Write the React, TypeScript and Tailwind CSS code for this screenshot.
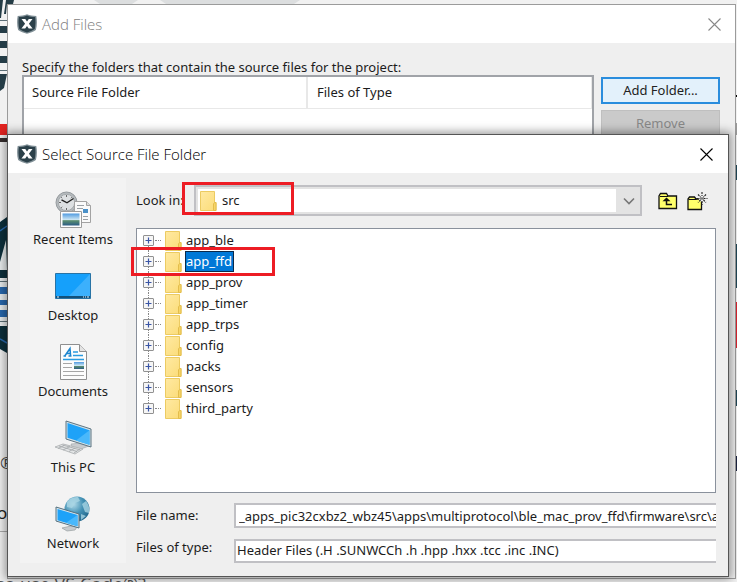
import React, { useState } from 'react';

const FOLDERS = ['app_ble', 'app_ffd', 'app_prov', 'app_timer', 'app_trps', 'config', 'packs', 'sensors', 'third_party'];

const AppIcon = () => (
  <svg width="20" height="20" viewBox="0 0 20 20" className="shrink-0" aria-hidden="true">
    <path d="M10 .2c2.600 1.100 6 1.700 9.300 1.700.9 4.500.8 9.800-.4 14.200-2.600 1.700-5.500 2.900-8.900 3.700-3.400-.8-6.300-2-8.900-3.700C-.1 11.700-.2 6.400.7 1.900 4 1.900 7.400 1.300 10 .2z" fill="#7f8e95" />
    <path d="M10 1.500c2.500 1 5.300 1.500 8.100 1.500.6 4 .5 8.300-.4 12-2.200 1.500-4.800 2.600-7.700 3.400-2.900-.8-5.500-1.900-7.700-3.400C1.400 11.300 1.300 7 1.900 3 4.700 3 7.500 2.500 10 1.500z" fill="#2b4049" />
    <path d="M4.500 5h3.800L10 7.500 11.800 5h3.700l-3.600 4.800 3.700 4.700h-3.900L10 12l-1.800 2.500H4.400l3.700-4.700z" fill="#fff" />
  </svg>
);

const CloseIcon = () => (
  <svg width="13" height="13" viewBox="0 0 13 13" fill="none" stroke="currentColor" strokeWidth="1.100" aria-hidden="true">
    <path d="M.5.5l12 12M12.500.5l-12 12" />
  </svg>
);

const FolderIcon = () => (
  <svg width="17" height="20" viewBox="0 0 17 20" className="shrink-0" aria-hidden="true">
    <defs>
      <linearGradient id="folder" x1="0" y1="0" x2="1" y2="1">
        <stop offset="0" stopColor="#ffe9a2" />
        <stop offset="1" stopColor="#fbdc78" />
      </linearGradient>
    </defs>
    <path d="M.5.5h14v11h1.500v8H.5z" fill="url(#folder)" stroke="#eccb62" />
    <path d="M13.500 19.500v-6.500l1-1.500h1.500v8z" fill="#f7d568" stroke="#e3bd4c" />
  </svg>
);

const UpFolderIcon = () => (
  <svg width="20" height="18" viewBox="0 0 20 18" aria-hidden="true">
    <path d="M1 16.500V4l1.500-2.500h6L10 4h8.500v12.500z" fill="#ffff6b" stroke="#111" strokeWidth="1.300" />
    <path d="M2 4.500h8" stroke="#111" />
    <path d="M8.500 7v5.500H14" fill="none" stroke="#111" strokeWidth="1.500" />
    <path d="M4.500 9.300h8l-4-3.800z" fill="#111" />
  </svg>
);

const NewFolderIcon = () => (
  <svg width="21" height="20" viewBox="0 0 21 20" aria-hidden="true">
    <path d="M1 18.500V8l1.500-2h5L9 8h5.500v10.500z" fill="#ffff6b" stroke="#111" strokeWidth="1.300" />
    <path d="M1.500 8.500h8" stroke="#111" />
    <circle cx="15" cy="7.500" r="3.200" fill="#efefef" />
    <path d="M15 1v4M15 10v4M9.500 7.500h4M16.500 7.500h4M11 3.500l2.500 2.500M16.500 9l2.500 2.500M19 3.500L16.500 6M13.500 9L11 11.500" stroke="#222" strokeWidth="1.100" strokeDasharray="2 1" />
    <path d="M13 5.500l4 4M17 5.500l-4 4" stroke="#444" strokeWidth=".9" />
  </svg>
);

const SkyDefs = ({ id }: { id: string }) => (
  <defs>
    <linearGradient id={id} x1="0" y1="0" x2="0" y2="1">
      <stop offset="0" stopColor="#4f9ae0" />
      <stop offset=".5" stopColor="#c9e4f3" />
      <stop offset=".6" stopColor="#5b8e6e" />
      <stop offset="1" stopColor="#2b5c86" />
    </linearGradient>
  </defs>
);

const RecentIcon = () => (
  <svg width="37" height="38" viewBox="0 0 37 38" aria-hidden="true">
    <SkyDefs id="skyRecent" />
    <circle cx="11.500" cy="11.500" r="10.500" fill="#b4b9bc" stroke="#94999d" />
    <circle cx="11.500" cy="11.500" r="8.200" fill="#dde0e2" stroke="#a5aaad" />
    <path d="M11.500 4v2M11.500 17v2M4 11.500h2M6.200 6.200l1 1M16.800 6.200l-1 1M6.200 16.800l1-1" stroke="#666" />
    <path d="M6.500 8.800l5.500 3 6.500-4.300" stroke="#222" strokeWidth="1.400" fill="none" />
    <path d="M19.500 10.500h12l4 4v17h-16z" fill="#fafafa" stroke="#a3a3a3" />
    <path d="M31.500 10.500v4h4" fill="#ddd" stroke="#a3a3a3" />
    <path d="M22 14.500h7M22 17.500h6M28 25.500h5M28 28.500h5" stroke="#9aa0a5" />
    <path d="M28 18h5v4h-5z" fill="#4a90c8" />
    <path d="M5.500 20.500h21v16h-21z" fill="#fdfdfd" stroke="#9c9c9c" />
    <path d="M7.500 22.500h17v12h-17z" fill="url(#skyRecent)" />
  </svg>
);

const DesktopIcon = () => (
  <svg width="36" height="26" viewBox="0 0 36 26" aria-hidden="true">
    <path d="M.5.5h35v25H.5z" fill="#15a0fb" stroke="#2873a5" />
    <path d="M35 1L14 23h21z" fill="#3cb0fc" />
    <path d="M1 23h34v2H1z" fill="#12507a" />
    <path d="M2 24h2M28 24h1M30 24h1M32 24h2" stroke="#e7f5ff" />
  </svg>
);

const DocumentsIcon = () => (
  <svg width="27" height="36" viewBox="0 0 27 36" aria-hidden="true">
    <SkyDefs id="skyDocs" />
    <path d="M.5.5h19l7 7v28H.5z" fill="#fcfcfc" stroke="#8f8f8f" />
    <path d="M19.500.5v7h7" fill="#e3e3e3" stroke="#8f8f8f" />
    <path d="M3.500 12h2.500M8.500 12h3M4.800 12L10 4.500l.6 7.500M6.500 9.500h4" stroke="#1c86cf" strokeWidth="1.500" fill="none" />
    <path d="M13 8h5M13 11.500h10M3 15.500h21" stroke="#2a9be0" strokeWidth="1.400" />
    <path d="M3 19.500h9M3 23.500h9M3 27.500h21M3 31.500h21" stroke="#a6a6a6" />
    <path d="M14 18h10v7H14z" fill="url(#skyDocs)" />
  </svg>
);

const ThisPcIcon = () => (
  <svg width="38" height="36" viewBox="0 0 38 36" aria-hidden="true">
    <path d="M17 24l10-1 8 3-8 3-9-2z" fill="#c8cccf" stroke="#a0a5a8" strokeWidth=".6" />
    <path d="M12 1l25 8v18l-25-8z" fill="#cfe0e8" stroke="#5d7481" />
    <path d="M13.500 3l22 7.200v14.600l-22-7z" fill="#1ea2f8" />
    <path d="M35.500 10.200v14.600L22 20.500z" fill="#49b8fb" />
    <path d="M1 27l8-3 20 5-8 5z" fill="#e3e5e6" stroke="#a9adaf" strokeWidth=".8" />
    <path d="M5 26l18 5.500M8.500 25l18 5M4 28.500l6-3M9 30l7-3.500M15 31.500l6-3.500M20 33l6-4" stroke="#a2a6a8" strokeWidth=".8" />
  </svg>
);

const NetworkIcon = () => (
  <svg width="36" height="36" viewBox="0 0 36 36" aria-hidden="true">
    <defs>
      <radialGradient id="globe" cx=".35" cy=".3" r=".8">
        <stop offset="0" stopColor="#b4dcea" />
        <stop offset=".5" stopColor="#4492b5" />
        <stop offset="1" stopColor="#1d6287" />
      </radialGradient>
    </defs>
    <circle cx="22" cy="13" r="12.500" fill="url(#globe)" />
    <path d="M12 6c3-4 7-5 11-5l2 4-5 2-3 5-5-1zM27 8l4-3c3 4 4 8 3 12l-4-1zM26 18l5 2-5 4z" fill="#a8d5e4" opacity=".8" />
    <path d="M7 32l9-2 6 1-2 3-8 1z" fill="#c8cccf" stroke="#8c9396" strokeWidth=".6" />
    <path d="M1 11l23 7v14L1 25z" fill="#d7e5ec" stroke="#54707f" />
    <path d="M2.500 13l20 6v11.200l-20-6z" fill="#1ea2f8" />
    <path d="M22.500 19v11.200L11 26.800z" fill="#49b8fb" />
  </svg>
);

const PLACES = [
  { label: 'Recent Items', icon: <RecentIcon /> },
  { label: 'Desktop', icon: <DesktopIcon /> },
  { label: 'Documents', icon: <DocumentsIcon /> },
  { label: 'This PC', icon: <ThisPcIcon /> },
  { label: 'Network', icon: <NetworkIcon /> },
];

interface TitleBarProps {
  title: string;
  inactive?: boolean;
}

const TitleBar: React.FC<TitleBarProps> = ({ title, inactive }) => (
  <header className={`flex h-[38px] items-center bg-white pl-[9px] font-['Open_Sans','Noto_Sans',sans-serif] text-[15px] font-light ${inactive ? 'pr-[14px] text-[#808080]' : 'pr-[15px] text-black'}`}>
    <AppIcon />
    <h2 className="ml-[5px] flex-1 leading-5">{title}</h2>
    <button aria-label="Close" className={inactive ? 'text-[#888]' : 'text-black'}>
      <CloseIcon />
    </button>
  </header>
);

/* Web page that shows through around the windows */
const Backdrop = () => (
  <div className="absolute inset-0 overflow-hidden bg-[#f1f1f1]" aria-hidden="true">
    <svg width="100%" height="582" className="absolute top-0 left-0">
      <path d="M94 0h44l-6 4H100zM160 0h140l-6 4H166z" fill="#dcdedf" />
      <path d="M0 0h3L1 18H0zM6 0h8l-1 4H7L6 14H4z" fill="#243c46" />
      <path d="M0 26h7v7H0zM0 41h7v7H0zM0 56h7v7H0zM0 74h7L4 88l-4 3z" fill="#243c46" />
      <path d="M0 20.500h7M0 70.500h7" stroke="#5c6f77" />
      <path d="M0 124h7v11H0z" fill="#e22320" />
      <path d="M0 138h7v4H0z" fill="#372f2f" />
      <path d="M0 222l7-5v61H0zM0 326h7v27l-7-4z" fill="#0d303c" />
      <path d="M0 231l7-5M0 339l7 4" stroke="#2868ad" strokeWidth="1.500" />
      <path d="M0 262l6-22 1 30H0z" fill="#e9edee" />
      <path d="M0 279h7v46H0z" fill="#e9edee" />
      <path d="M0 281.500h7M0 321.500h7" stroke="#5c6f77" />
      <path d="M0 287h7v7H0zM0 300h7v5H0zM0 310h7v7H0z" fill="#2868ad" />
      <path d="M0 531.500h7" stroke="#aaa" />
    </svg>
    <div className="absolute inset-y-0 right-0 flex w-0.5 flex-col">
      <div className="mt-[95px] h-[2px] bg-black" />
      <div className="mt-[26px] h-[12px] bg-[#999]" />
      <div className="mt-[30px] h-[15px] bg-[#1f4656]" />
      <div className="mt-[64px] h-[44px] bg-[#1f4656]" />
      <div className="mt-[14px] h-[46px] bg-[#d8222d]" />
      <div className="mt-[42px] h-[16px] bg-[#1f4656]" />
      <div className="mt-[50px] h-[15px] bg-[#1b2340]" />
    </div>
    <p className="absolute top-[453px] left-0 text-[17px] leading-5 text-[#444]">®</p>
    <p className="absolute top-[501px] left-[-3px] text-[17px] leading-6 text-[#222]">o</p>
    <p className="absolute bottom-[-14px] left-[-4px] font-['Open_Sans',sans-serif] text-[18px] leading-6 text-[#555]">so use VS Code®?</p>
  </div>
);

const AddFilesWindow = () => (
  <section className="flex flex-1 flex-col border border-[#9b9b9b] bg-[#efefef]">
    <TitleBar title="Add Files" inactive />
    <div className="flex items-start gap-[7px] pt-4 pr-[15px] pl-[14px]">
      <div className="flex-1">
        <p className="h-4 leading-4">Specify the folders that contain the source files for the project:</p>
        <div className="h-[70px] border-2 border-[#a0a3a8] bg-white">
          <table className="w-full table-fixed">
            <thead>
              <tr className="h-[31px] border-b border-[#e8e8e8] text-left">
                <th className="w-[283px] border-r-2 border-[#e8e8e8] pl-2 font-normal">Source File Folder</th>
                <th className="border-r border-[#e8e8e8] pl-[9px] font-normal">Files of Type</th>
              </tr>
            </thead>
          </table>
        </div>
      </div>
      <div className="flex w-[119px] flex-col gap-[6px] pt-[18px]">
        <button className="h-[27px] border-2 border-[#2a8ddd] bg-[#e3f1fb] text-[#222]">Add Folder...</button>
        <button disabled className="h-[27px] border border-[#bfbfbf] bg-[#cacaca] text-[#888]">Remove</button>
      </div>
    </div>
  </section>
);

const PlacesBar = () => (
  <nav className="flex w-[106px] flex-col gap-[18px] bg-[#f3f3f3] pt-3">
    {PLACES.map(p => (
      <button key={p.label} className="flex flex-col items-center">
        <span className="flex h-10 items-center">{p.icon}</span>
        <span className="h-[18px] leading-[18px] whitespace-nowrap">{p.label}</span>
      </button>
    ))}
  </nav>
);

const FolderTree = () => {
  const [selected, setSelected] = useState('app_ffd');

  return (
    <div className="relative h-[265px] border border-[#8a919c] bg-white pt-px pl-[6px]">
      <ul>
        {FOLDERS.map((name, i) => (
          <li key={name} className="flex h-[21px] items-center">
            <span className="flex h-full w-[11px] flex-col items-center">
              <span className={`w-px flex-1 border-l border-dotted ${i === 0 ? 'border-transparent' : 'border-[#888]'}`} />
              <button aria-label={`Expand ${name}`} className="h-[11px] w-[11px] rounded-[1px] border border-[#919191] bg-[#f6f6f6]">
                <svg width="9" height="9" viewBox="0 0 9 9" className="block" aria-hidden="true">
                  <path d="M4.500 1.500v6M1.500 4.500h6" stroke="#3a55a5" strokeWidth="1.200" />
                </svg>
              </button>
              <span className={`w-px flex-1 border-l border-dotted ${i === FOLDERS.length - 1 ? 'border-transparent' : 'border-[#888]'}`} />
            </span>
            <span className="mr-1 ml-px w-[6px] border-t border-dotted border-[#888]" />
            <FolderIcon />
            <button
              onClick={() => setSelected(name)}
              className={`ml-[3px] h-[21px] border pr-px leading-[19px] ${name === selected ? 'border-[#0b2a4a] bg-[#0078d7] text-white' : 'border-transparent'}`}
            >
              {name}
            </button>
          </li>
        ))}
      </ul>
      <div className="pointer-events-none absolute top-[18px] left-[-6px] h-[29px] w-36 border-3 border-[#ed1c24]" />
    </div>
  );
};

const SelectFolderDialog = () => (
  <section role="dialog" aria-label="Select Source File Folder" className="absolute top-[130px] right-[7px] left-0 border border-[#555] bg-[#efefef] shadow-[0_0_9px_2px_rgba(0,0,0,0.4)]">
    <TitleBar title="Select Source File Folder" />
    <div className="flex pt-[5px] pr-3 pb-[13px] pl-3">
      <PlacesBar />
      <div className="flex min-w-0 flex-1 flex-col pt-[7px] pl-[10px]">
        <div className="relative mb-3 flex h-[31px] items-center">
          <label htmlFor="look-in" className="w-[58px] whitespace-nowrap">Look in:</label>
          <div className="flex h-full flex-1 border-2 border-[#c0c0c4] bg-[#e3e3e3] p-[2px]">
            <div className="flex flex-1 items-center bg-white pl-0.5">
              <FolderIcon />
              <select id="look-in" className="ml-1 flex-1 appearance-none bg-transparent pl-px">
                <option>src</option>
              </select>
            </div>
            <svg width="22" height="23" viewBox="0 0 22 23" fill="none" aria-hidden="true">
              <path d="M8 9.500l5 5 5-5" stroke="#777" strokeWidth="1.600" />
            </svg>
          </div>
          <button aria-label="Up one level" className="ml-4">
            <UpFolderIcon />
          </button>
          <button aria-label="Create new folder" className="mr-2 ml-[9px]">
            <NewFolderIcon />
          </button>
          <div className="pointer-events-none absolute top-[-3px] left-[46px] h-[33px] w-28 border-3 border-[#ed1c24]" />
        </div>
        <FolderTree />
        <div className="mt-[10px] flex h-[25px] items-center">
          <label htmlFor="file-name" className="w-[98px] whitespace-nowrap">File name:</label>
          <input
            id="file-name"
            className="h-full min-w-0 flex-1 border-y-2 border-l-2 border-[#c0c0c4] bg-white pl-[3px]"
            defaultValue={'_apps_pic32cxbz2_wbz45\\apps\\multiprotocol\\ble_mac_prov_ffd\\firmware\\src\\ap'}
          />
        </div>
        <div className="mt-[11px] flex h-6">
          <label htmlFor="file-type" className="w-[98px] leading-4 whitespace-nowrap">Files of type:</label>
          <select id="file-type" className="h-full min-w-0 flex-1 appearance-none border-y-2 border-l-2 border-[#c0c0c4] bg-white pl-px">
            <option>Header Files (.H .SUNWCCh .h .hpp .hxx .tcc .inc .INC)</option>
          </select>
        </div>
      </div>
    </div>
  </section>
);

const App: React.FC = () => (
  <main className="relative flex min-h-screen flex-col pt-1 pr-px pb-[3px] pl-[7px] font-['Noto_Sans','Open_Sans',sans-serif] text-[13px] text-[#1c1c1c]">
    <Backdrop />
    <div className="relative flex flex-1 flex-col">
      <AddFilesWindow />
      <SelectFolderDialog />
    </div>
  </main>
);

export default App;
